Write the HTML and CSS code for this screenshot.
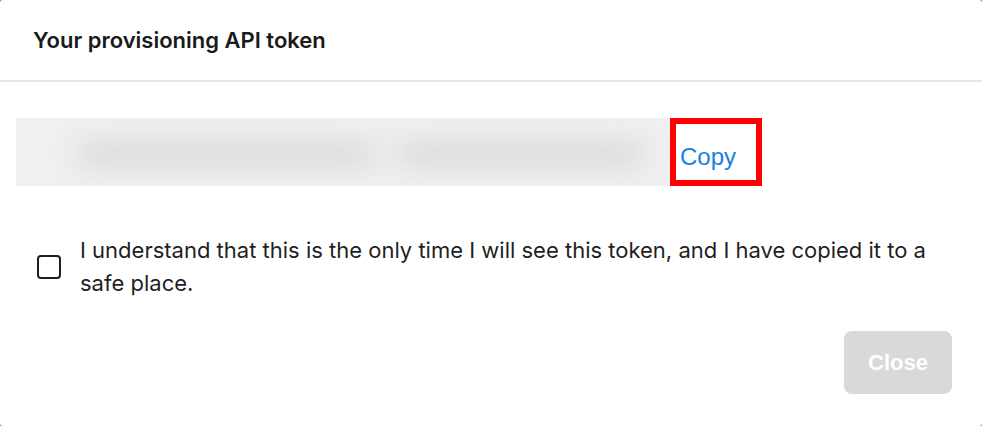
FILE: index.html
```html
<!DOCTYPE HTML>
<html>
<head>
<meta http-equiv="Content-Type" content="text/html; charset=utf-8">
<title>API token</title>
<link rel="stylesheet" href="styles.css">
</head>

<body>
	<div class="dialog">
		<div class="dialog-head">
			<h2>Your provisioning API token</h2>
		</div>
		<div class="dialog-body">
			<div class="token-row">
				<div class="token-value">
					<span class="blur blur-a"></span>
					<span class="blur blur-b"></span>
				</div>
				<a href="javascript:;" class="copy">Copy</a>
			</div>
			<label class="confirm">
				<span class="box"></span>
				<span class="confirm-text">I understand that this is the only time I will see this token, and I have copied it to a safe place.</span>
			</label>
		</div>
		<div class="dialog-foot">
			<button class="btn-close" disabled>Close</button>
		</div>
	</div>
</body>
</html>
```

FILE: styles.css
```css
html, body { margin: 0; padding: 0; background: #8a8a8a; }
body { font-family: Inter, "Noto Sans", sans-serif; color: #1c1c1c; }

.dialog { width: 982px; height: 426px; background: #fff; border-radius: 3px; display: flex; flex-direction: column; overflow: hidden; }

.dialog-head { height: 80px; border-bottom: 2px solid #e6e6e6; display: flex; align-items: center; padding-left: 33px; box-sizing: content-box; flex-shrink: 0; }
.dialog-head h2 { margin: 0; font-size: 22px; font-weight: 600; color: #1a1a1a; }

.dialog-body { padding: 36px 16px 0; }

.token-row { display: flex; height: 68px; }
.token-value { width: 654px; background: #f0f0f0; position: relative; overflow: hidden; }
.token-value .blur { position: absolute; top: 24px; height: 24px; background: #d8d8d8; border-radius: 12px; filter: blur(14px); }
.token-value .blur-a { left: 60px; width: 300px; }
.token-value .blur-b { left: 380px; width: 250px; }

.copy { width: 92px; box-sizing: border-box; border: 6px solid #ff0000; font-family: "Liberation Sans", Arial, sans-serif; font-size: 24px; color: #1a7fe3; text-decoration: none; padding: 19px 0 0 4px; }

.confirm { display: flex; align-items: center; gap: 19px; margin-top: 48px; padding-left: 21px; cursor: pointer; }
.confirm .box { width: 24px; height: 24px; box-sizing: border-box; border: 2px solid #1f1f1f; border-radius: 4px; flex-shrink: 0; }
.confirm-text { font-size: 22px; line-height: 33px; color: #1f1f1f; width: 870px; }

.dialog-foot { display: flex; justify-content: flex-end; padding: 31px 30px 0; }
.btn-close { width: 108px; height: 63px; border: none; border-radius: 8px; background: #d9d9d9; color: #fff; font-family: "Liberation Sans", Arial, sans-serif; font-size: 22px; font-weight: bold; }
```
